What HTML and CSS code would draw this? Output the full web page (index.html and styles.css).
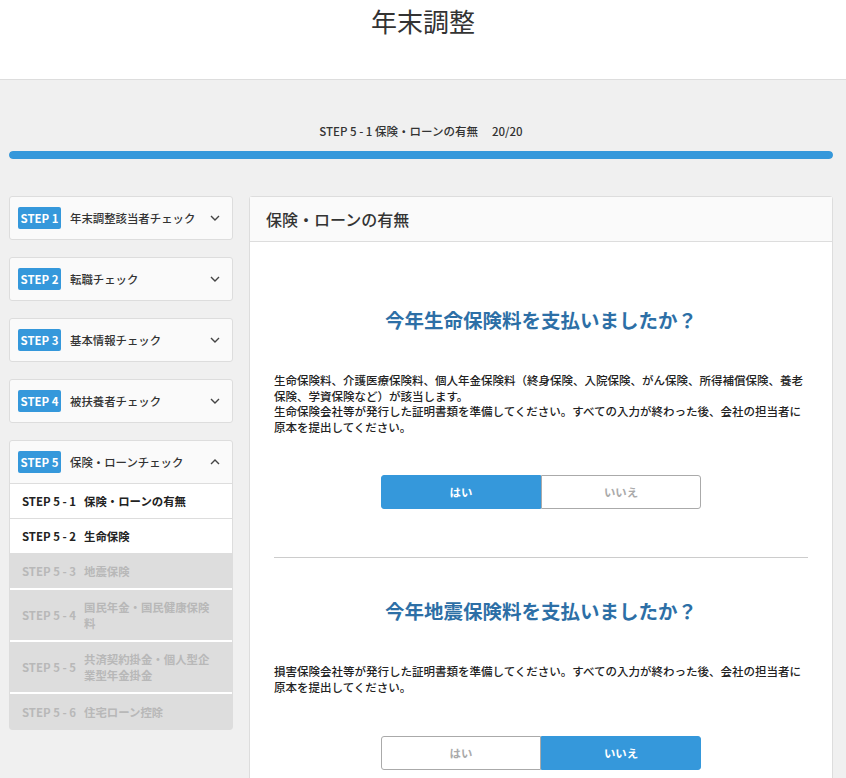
FILE: index.html
```html
<!DOCTYPE html>
<html lang="ja">
<head>
  <meta charset="utf-8">
  <title>年末調整</title>
  <link rel="stylesheet" href="styles.css">
</head>
<body>

  <header class="page-header">
    <h1>年末調整</h1>
  </header>

  <main class="page-main">
    <p class="progress-label">STEP 5 - 1 保険・ローンの有無<span class="progress-count">20/20</span></p>
    <div class="progress-bar"><div class="progress-fill" style="width: 100%"></div></div>

    <div class="layout">
      <aside class="steps">
        <div class="step">
          <div class="step-head">
            <span class="badge">STEP 1</span>
            <span class="step-title">年末調整該当者チェック</span>
            <svg class="chev" width="10" height="6" viewBox="0 0 10 6"><polyline points="1,1 5,5 9,1" fill="none" stroke="#444" stroke-width="1.4"/></svg>
          </div>
        </div>
        <div class="step">
          <div class="step-head">
            <span class="badge">STEP 2</span>
            <span class="step-title">転職チェック</span>
            <svg class="chev" width="10" height="6" viewBox="0 0 10 6"><polyline points="1,1 5,5 9,1" fill="none" stroke="#444" stroke-width="1.4"/></svg>
          </div>
        </div>
        <div class="step">
          <div class="step-head">
            <span class="badge">STEP 3</span>
            <span class="step-title">基本情報チェック</span>
            <svg class="chev" width="10" height="6" viewBox="0 0 10 6"><polyline points="1,1 5,5 9,1" fill="none" stroke="#444" stroke-width="1.4"/></svg>
          </div>
        </div>
        <div class="step">
          <div class="step-head">
            <span class="badge">STEP 4</span>
            <span class="step-title">被扶養者チェック</span>
            <svg class="chev" width="10" height="6" viewBox="0 0 10 6"><polyline points="1,1 5,5 9,1" fill="none" stroke="#444" stroke-width="1.4"/></svg>
          </div>
        </div>
        <div class="step open">
          <div class="step-head">
            <span class="badge">STEP 5</span>
            <span class="step-title">保険・ローンチェック</span>
            <svg class="chev" width="10" height="6" viewBox="0 0 10 6"><polyline points="1,5 5,1 9,5" fill="none" stroke="#444" stroke-width="1.4"/></svg>
          </div>
          <ul class="substeps">
            <li class="sub"><span class="sub-no">STEP 5 - 1</span><span class="sub-name">保険・ローンの有無</span></li>
            <li class="sub"><span class="sub-no">STEP 5 - 2</span><span class="sub-name">生命保険</span></li>
            <li class="sub disabled"><span class="sub-no">STEP 5 - 3</span><span class="sub-name">地震保険</span></li>
            <li class="sub disabled"><span class="sub-no">STEP 5 - 4</span><span class="sub-name">国民年金・国民健康保険料</span></li>
            <li class="sub disabled"><span class="sub-no">STEP 5 - 5</span><span class="sub-name">共済契約掛金・個人型企業型年金掛金</span></li>
            <li class="sub disabled"><span class="sub-no">STEP 5 - 6</span><span class="sub-name">住宅ローン控除</span></li>
          </ul>
        </div>
      </aside>

      <section class="panel">
        <div class="panel-head">保険・ローンの有無</div>
        <div class="panel-body">
          <div class="question">
            <h2>今年生命保険料を支払いましたか？</h2>
            <p>生命保険料、介護医療保険料、個人年金保険料（終身保険、入院保険、がん保険、所得補償保険、養老保険、学資保険など）が該当します。<br>生命保険会社等が発行した証明書類を準備してください。すべての入力が終わった後、会社の担当者に原本を提出してください。</p>
            <div class="choice">
              <button class="active">はい</button>
              <button>いいえ</button>
            </div>
          </div>
          <div class="question">
            <h2>今年地震保険料を支払いましたか？</h2>
            <p>損害保険会社等が発行した証明書類を準備してください。すべての入力が終わった後、会社の担当者に原本を提出してください。</p>
            <div class="choice">
              <button>はい</button>
              <button class="active">いいえ</button>
            </div>
          </div>
        </div>
      </section>
    </div>
  </main>

</body>
</html>
```

FILE: styles.css
```css
* { box-sizing: border-box; }
body { margin: 0; font-family: "Noto Sans CJK JP", "Noto Sans", sans-serif; color: #333; background: #f0f0f0; }

.page-header { background: #fff; height: 80px; border-bottom: 1px solid #ddd; }
.page-header h1 { margin: 0; padding-top: 2px; text-align: center; font-size: 26px; font-weight: 400; line-height: 38px; color: #333; }

.page-main { padding: 0 13px 40px 9px; }
.progress-label { margin: 41px 0 0; text-align: center; font-size: 11.5px; font-weight: 500; line-height: 20px; }
.progress-count { margin-left: 14px; }
.progress-bar { margin-top: 10px; height: 8px; background: #ddd; border-radius: 4px; overflow: hidden; }
.progress-fill { height: 100%; background: #3598db; border-radius: 4px; }

.layout { display: flex; gap: 16px; margin-top: 37px; align-items: flex-start; }

.steps { width: 224px; flex: none; display: flex; flex-direction: column; gap: 17px; }
.step { background: #fafafa; border: 1px solid #ddd; border-radius: 3px; }
.step-head { height: 42px; display: flex; align-items: center; padding: 0 12px 0 8px; }
.badge { background: #3598db; color: #fff; font-size: 11.4px; font-weight: 700; width: 43px; height: 22px; line-height: 22px; text-align: center; border-radius: 2px; flex: none; }
.step-title { margin-left: 9px; flex: 1; font-size: 11.4px; font-weight: 500; color: #333; }
.chev { flex: none; }

.substeps { list-style: none; margin: 0; padding: 0; border-top: 1px solid #ddd; }
.sub { display: flex; align-items: center; min-height: 35px; padding: 9px 14px 9px 12px; background: #fff; border-bottom: 1px solid #ddd; font-size: 11.4px; font-weight: 700; color: #222; line-height: 16px; }
.sub.disabled { background: #ddd; color: #b8b8b8; border-bottom: 2px solid #fff; }
.sub.disabled:last-child { border-bottom: none; }
.sub-no { width: 62px; flex: none; }
.sub-name { flex: 1; }

.panel { flex: 1; background: #fff; border: 1px solid #ddd; border-radius: 3px; min-height: 600px; }
.panel-head { height: 45px; background: #fafafa; border-bottom: 1px solid #ddd; padding: 0 16px; font-size: 16px; font-weight: 500; line-height: 44px; }
.panel-body { padding: 25px 24px 0; }

.question { padding: 38px 0 48px; border-bottom: 1px solid #ccc; }
.question:last-child { border-bottom: none; }
.question h2 { margin: 0; text-align: center; font-size: 19.5px; font-weight: 700; line-height: 30px; color: #2d6fa6; }
.question p { margin: 38px 0 0; font-size: 11.5px; font-weight: 500; line-height: 15.6px; color: #222; }
.choice { display: flex; justify-content: center; margin-top: 40px; }
.choice button { width: 160px; height: 34px; background: #fff; border: 1px solid #aaa; color: #aaa; font-family: inherit; font-size: 11.4px; font-weight: 700; }
.choice button:first-child { border-radius: 3px 0 0 3px; }
.choice button:last-child { border-radius: 0 3px 3px 0; }
.choice button.active { background: #3598db; border-color: #3598db; color: #fff; }
```
